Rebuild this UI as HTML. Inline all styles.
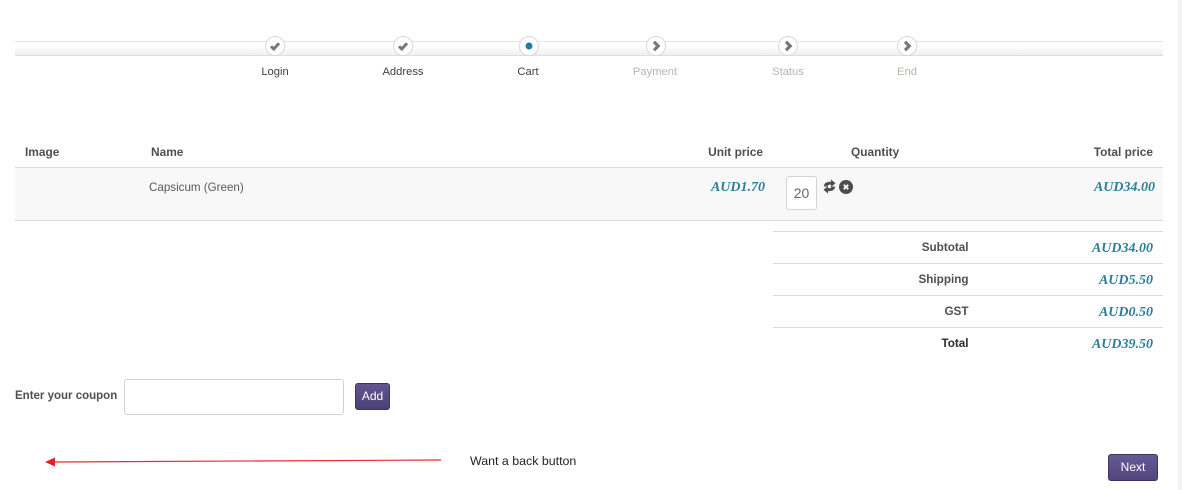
<!DOCTYPE html>
<html>
<head>
<meta charset="utf-8">
<style>
html,body{margin:0;padding:0;background:#fff;}
#p{position:relative;width:1182px;height:490px;overflow:hidden;background:#fff;font-family:"Liberation Sans",sans-serif;font-size:12px;color:#555;}
#p div{position:absolute;white-space:nowrap;}
.strip{left:1178px;top:0;width:4px;height:490px;background:#f1f3f6;}
.bar{left:15px;top:41px;width:1148px;height:13px;border-top:1px solid #e6e6e6;border-bottom:1px solid #dedede;background:linear-gradient(#fff 30%,#f0f0f0);}
.c{width:18px;height:18px;border:1px solid #d8d8d8;border-radius:50%;background:#fff;top:36px;}
.c svg{position:absolute;left:0;top:0;}
.l{top:65px;line-height:14px;font-size:11.2px;text-align:center;width:80px;color:#3f3f3f;}
.l.g{color:#b5b5b5;}
.th{top:145px;line-height:15px;font-size:11.9px;font-weight:bold;color:#4f4f4f;}
.r{text-align:right;}
.price{font-family:"Liberation Serif",serif;font-style:italic;font-weight:bold;font-size:14px;color:#2a8098;line-height:16px;text-align:right;}
.lb{font-weight:bold;font-size:11.7px;color:#4f4f4f;line-height:15px;text-align:right;left:780px;width:188.500px;}
.hr{left:773px;width:390px;height:1px;background:#dcdcdc;}
.btn{background:linear-gradient(#615590,#4b4076);border:1px solid #3e3566;border-radius:3px;color:#fff;text-align:center;box-sizing:border-box;}
</style>
</head>
<body>
<div id="p">
<div class="strip"></div>
<div class="bar"></div>

<div class="c" style="left:265px"><svg width="18" height="18" viewBox="0 0 18 18"><path d="M5 9.300 L7.800 12 L13 6.300" fill="none" stroke="#777" stroke-width="3"/></svg></div>
<div class="c" style="left:393px"><svg width="18" height="18" viewBox="0 0 18 18"><path d="M5 9.300 L7.800 12 L13 6.300" fill="none" stroke="#777" stroke-width="3"/></svg></div>
<div class="c" style="left:519px"><svg width="18" height="18" viewBox="0 0 18 18"><circle cx="9" cy="9" r="3.500" fill="#1f7f9c"/></svg></div>
<div class="c" style="left:646px"><svg width="18" height="18" viewBox="0 0 18 18"><path d="M7 4.800 L11.200 9 L7 13.200" fill="none" stroke="#777" stroke-width="3.200"/></svg></div>
<div class="c" style="left:778px"><svg width="18" height="18" viewBox="0 0 18 18"><path d="M7 4.800 L11.200 9 L7 13.200" fill="none" stroke="#777" stroke-width="3.200"/></svg></div>
<div class="c" style="left:897px"><svg width="18" height="18" viewBox="0 0 18 18"><path d="M7 4.800 L11.200 9 L7 13.200" fill="none" stroke="#777" stroke-width="3.200"/></svg></div>

<div class="l" style="left:235px">Login</div>
<div class="l" style="left:363px">Address</div>
<div class="l" style="left:488px">Cart</div>
<div class="l g" style="left:615px">Payment</div>
<div class="l g" style="left:748px">Status</div>
<div class="l g" style="left:867px;color:#b3b8a8">End</div>

<div class="th" style="left:25px">Image</div>
<div class="th" style="left:151px">Name</div>
<div class="th r" style="left:663px;width:100px">Unit price</div>
<div class="th" style="left:851px">Quantity</div>
<div class="th r" style="left:1053px;width:100px">Total price</div>

<div style="left:15px;top:167px;width:1148px;height:52px;background:#f8f8f8;border-top:1px solid #dcdcdc;border-bottom:1px solid #dcdcdc;"></div>
<div style="left:149px;top:180px;line-height:15px;font-size:11.600px;color:#5a5a5a;">Capsicum (Green)</div>
<div class="price" style="left:665px;width:100px;top:180px;">AUD1.70</div>
<div style="left:786px;top:176px;width:31px;height:34px;box-sizing:border-box;border:1px solid #d4d4d4;border-radius:3px;background:#fff;font-size:14px;color:#666;text-align:center;line-height:33px;">20</div>
<div style="left:823px;top:179px;width:13px;height:15px;"><svg width="13" height="15" viewBox="0 0 13 15" style="display:block"><path d="M1 7.500 C1 4 3.500 2.800 8 2.800 L8 0.500 L12.500 4.300 L8 8 L8 5.800 C5.500 5.800 4.800 6 4.400 7.500 Z" fill="#4d4d4d"/><path d="M12 7.500 C12 11 9.500 12.200 5 12.200 L5 14.500 L0.500 10.700 L5 7 L5 9.200 C7.500 9.200 8.200 9 8.600 7.500 Z" fill="#4d4d4d"/></svg></div>
<div style="left:839px;top:180px;width:14px;height:14px;"><svg width="14" height="14" viewBox="0 0 14 14" style="display:block"><circle cx="7" cy="7" r="7" fill="#4d4d4d"/><path d="M4.800 4.800 L9.200 9.200 M9.200 4.800 L4.800 9.200" stroke="#f4f4f4" stroke-width="2"/></svg></div>
<div class="price" style="left:1055px;width:100px;top:180px;">AUD34.00</div>

<div class="hr" style="top:231px"></div>
<div class="hr" style="top:263px"></div>
<div class="hr" style="top:295px"></div>
<div class="hr" style="top:327px"></div>

<div class="lb" style="top:240px">Subtotal</div>
<div class="lb" style="top:272px">Shipping</div>
<div class="lb" style="top:304px">GST</div>
<div class="lb" style="top:336px;color:#2c2c2c">Total</div>

<div class="price" style="left:1053px;width:100px;top:241px;">AUD34.00</div>
<div class="price" style="left:1053px;width:100px;top:273px;">AUD5.50</div>
<div class="price" style="left:1053px;width:100px;top:305px;">AUD0.50</div>
<div class="price" style="left:1053px;width:100px;top:337px;">AUD39.50</div>

<div style="left:15px;top:389px;line-height:15px;font-weight:bold;font-size:11.500px;color:#4f4f4f;">Enter your coupon</div>
<div style="left:124px;top:379px;width:220px;height:36px;box-sizing:border-box;border:1px solid #d2d2d2;border-radius:3px;background:#fff;"></div>
<div class="btn" style="left:355px;top:383px;width:35px;height:27px;font-size:12px;line-height:25px;">Add</div>

<div style="left:0;top:450px;width:460px;height:24px;"><svg width="460" height="24" viewBox="0 0 460 24" style="display:block"><path d="M53 12 L441 10" stroke="#ee2a35" stroke-width="1.200" fill="none"/><path d="M45 12 L55 7.500 L55 16.500 Z" fill="#ee1c25"/></svg></div>
<div style="left:470px;top:454px;line-height:15px;font-size:12.400px;color:#222;">Want a back button</div>

<div class="btn" style="left:1108px;top:454px;width:50px;height:27px;font-size:12px;line-height:25px;background:linear-gradient(#655a94,#51467c);">Next</div>
</div>
</body>
</html>
